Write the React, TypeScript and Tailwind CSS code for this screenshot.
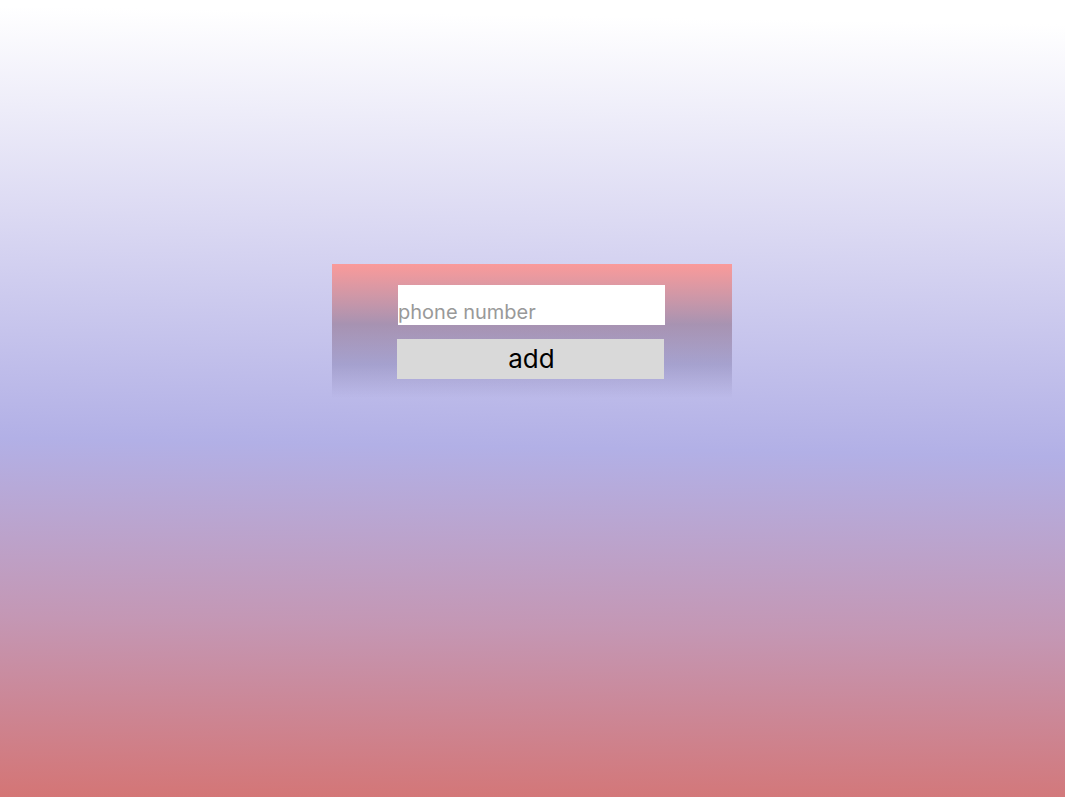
import React from 'react';

export default function App() {
  return (
    <div
      className="min-h-screen w-full flex flex-col items-center pt-[264px] pr-px bg-[linear-gradient(181deg,#ffffff_3%,#dcdaf3_28%,#b2b0e6_56%,#c497b4_78%,#d47575_100%)]"
      style={{ fontFamily: 'Inter, "Noto Sans", sans-serif' }}
    >
      {/* Card */}
      <div className="w-[400px] h-[134px] flex flex-col items-start pt-[21px] bg-[linear-gradient(180deg,#fa9a9a_0%,rgba(145,112,138,0.6)_45%,rgba(120,112,160,0.38)_75%,rgba(170,165,220,0)_100%)]">
        <input
          type="text"
          placeholder="phone number"
          className="w-[267px] h-[40px] ml-[66px] bg-white pt-[14px] px-0 text-[20px] leading-[24px] text-black placeholder:text-[#999999] outline-none border-0"
        />
        <button
          type="button"
          className="mt-[14px] ml-[65px] w-[267px] h-[40px] bg-[#d9d9d9] pl-[2px] text-[26px] leading-[30px] text-black"
        >
          add
        </button>
      </div>
    </div>
  );
}
